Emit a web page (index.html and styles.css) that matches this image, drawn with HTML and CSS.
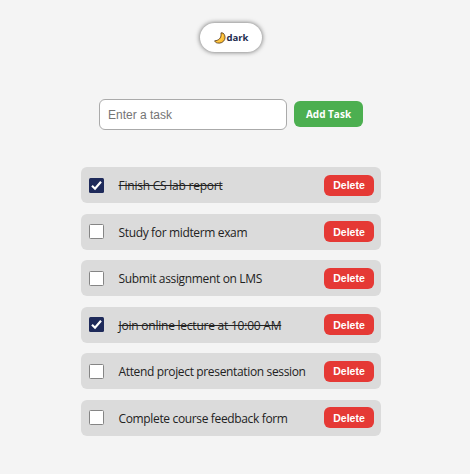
FILE: index.html
```html
<!DOCTYPE html>
<html lang="en">
<head>
<meta charset="utf-8">
<title>Tasks</title>
<link rel="stylesheet" href="styles.css">
</head>
<body>
<button class="theme"><svg class="moon" width="12" height="12" viewBox="0 0 12 12"><path d="M7 .8L9 1C10.800 2.500 11.600 5 10.700 7.500C9.500 10.300 6.500 11.600 3.500 11C2 10.800 1 10 .7 8.800C4.500 8.600 7.200 6 7 2.800Z" fill="#fdbd30" stroke="#4a3420" stroke-width=".8" stroke-linejoin="round"/><path d="M8.500 3C9 6.400 6.500 9.200 3.300 9.800" fill="none" stroke="#ffd968" stroke-width=".7"/></svg><span>dark</span></button>
<form class="entry">
<input class="field" type="text" placeholder="Enter a task">
<button class="add" type="button">Add Task</button>
</form>
<ul class="tasks">
<li class="task done"><span class="box"><svg viewBox="0 0 15 15"><path d="M3 7.800L6 10.700L12 3.700"/></svg></span><span class="label"><span>Finish CS lab report</span></span><button class="delete">Delete</button></li>
<li class="task"><span class="box"></span><span class="label"><span>Study for midterm exam</span></span><button class="delete">Delete</button></li>
<li class="task"><span class="box"></span><span class="label"><span>Submit assignment on LMS</span></span><button class="delete">Delete</button></li>
<li class="task done"><span class="box"><svg viewBox="0 0 15 15"><path d="M3 7.800L6 10.700L12 3.700"/></svg></span><span class="label"><span>Join online lecture at 10:00 AM</span></span><button class="delete">Delete</button></li>
<li class="task"><span class="box"></span><span class="label"><span>Attend project presentation session</span></span><button class="delete">Delete</button></li>
<li class="task"><span class="box"></span><span class="label"><span>Complete course feedback form</span></span><button class="delete">Delete</button></li>
</ul>
</body>
</html>
```
FILE: styles.css
```css
* { box-sizing: border-box; }
body {
  margin: 0;
  height: 474px;
  padding-top: 23px;
  background: #f4f4f4;
  font-family: "Open Sans", "Noto Sans", sans-serif;
  color: #222;
  overflow: hidden;
}
button { border: 0; padding: 0; }
.theme {
  display: flex;
  align-items: center;
  justify-content: center;
  width: 62px;
  height: 29px;
  margin: 0 0 0 200px;
  border-radius: 15px;
  background: #fff;
  box-shadow: 0 0 5px rgba(0, 0, 0, .6);
  font: bold 9.5px "Open Sans", sans-serif;
  color: #222b4d;
}
.moon { margin-right: 1px; }
.entry {
  display: flex;
  align-items: center;
  gap: 7px;
  margin: 47px 0 0 99px;
}
.field {
  width: 188px;
  height: 31px;
  padding: 0 8px;
  border: 1px solid #aaa;
  border-radius: 6px;
  background: #fff;
  font: 12px "Liberation Sans", sans-serif;
}
.field::placeholder { color: #757575; }
.add {
  width: 69px;
  height: 26px;
  margin-bottom: 1px;
  border-radius: 6px;
  background: #4caf50;
  color: #fff;
  font: bold 10px "Open Sans", sans-serif;
}
.tasks {
  width: 300px;
  margin: 37px 0 0 81px;
  padding: 0;
  list-style: none;
  display: grid;
  gap: 10.52px;
}
.task {
  display: flex;
  align-items: center;
  height: 36px;
  padding: .6px 7px 0 8px;
  border-radius: 6px;
  background: #dbdbdb;
}
.box {
  flex: none;
  width: 15px;
  height: 15px;
  border: 1px solid #858585;
  border-radius: 1.5px;
  background: #fff;
}
.done .box { border: 0; background: #1e2a5a; }
.box svg { display: block; width: 15px; height: 15px; }
.box path { fill: none; stroke: #fff; stroke-width: 2.2; }
.label {
  flex: 1;
  margin-left: 14.5px;
  font-size: 12px;
  line-height: 16px;
  letter-spacing: -.35px;
  white-space: nowrap;
  position: relative;
  top: 1px;
}
.done .label { letter-spacing: -.23px; }
.done .label span { text-decoration: line-through; }
.delete {
  width: 50px;
  height: 21px;
  border-radius: 6px;
  background: #e53935;
  color: #fff;
  font: bold 10.5px "Liberation Sans", sans-serif;
}
```
